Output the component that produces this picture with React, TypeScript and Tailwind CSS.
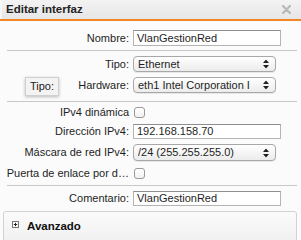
import React from "react";

const Arrows = () => (
  <svg width="6" height="9" viewBox="0 0 6 9" className="absolute right-[6px] top-1/2 -translate-y-1/2">
    <path d="M3 0 L6 3.5 L0 3.5 Z" fill="#222" />
    <path d="M3 9 L6 5.5 L0 5.5 Z" fill="#222" />
  </svg>
);

const Label = ({ children }: { children: React.ReactNode }) => (
  <div className="w-[129px] shrink-0 text-right pr-[0px] whitespace-nowrap">{children}</div>
);

const Input = ({ value }: { value: string }) => (
  <div className="ml-[4px] w-[148px] h-full border border-[#b4b4b4] border-t-[#8e8e8e] bg-white flex items-center pl-[3px] overflow-hidden whitespace-nowrap">
    {value}
  </div>
);

const Select = ({ value }: { value: string }) => (
  <div className="relative ml-[4px] w-[143px] h-full rounded-[4px] border border-[#a8a8a8] bg-gradient-to-b from-white to-[#ececec] flex items-center pl-[4px] pr-[14px] overflow-hidden whitespace-nowrap shadow-[0_1px_0_rgba(0,0,0,0.08)]">
    <span className="overflow-hidden">{value}</span>
    <Arrows />
  </div>
);

const Check = () => (
  <div className="ml-[5px] w-[11px] h-[11px] rounded-[3px] border border-[#9a9a9a] bg-gradient-to-b from-white to-[#f1f1f1]" />
);

const Sep = ({ mt }: { mt: string }) => (
  <div className={`${mt} mx-[7px] mr-[4px] h-px bg-[#c8c8c8]`} />
);

export default function App() {
  return (
    <div
      className="relative w-[301px] h-[240px] overflow-hidden bg-[#fbfbfb] text-[11px] text-[#1e1e1e]"
      style={{ fontFamily: '"Liberation Sans", Arial, sans-serif' }}
    >
      {/* Title bar */}
      <div className="h-[19px] bg-gradient-to-b from-[#f3f3f3] to-[#e6e6e6] border-l-2 border-[#f7f7f7] flex items-center justify-between pl-[4px] pr-[10px]">
        <span className="font-bold text-[11.5px] text-[#222]">Editar interfaz</span>
        <svg width="9" height="9" viewBox="0 0 9 9">
          <path d="M1 1 L8 8 M8 1 L1 8" stroke="#b8b8b8" strokeWidth="2.2" strokeLinecap="round" />
        </svg>
      </div>
      <div className="h-[2px] bg-[#f58426]" />

      {/* Form */}
      <div className="flex flex-col">
        <div className="mt-[9px] h-[16px] flex items-center">
          <Label>Nombre:</Label>
          <Input value="VlanGestionRed" />
        </div>
        <Sep mt="mt-[4px]" />
        <div className="mt-[5px] h-[16px] flex items-center">
          <Label>Tipo:</Label>
          <Select value="Ethernet" />
        </div>
        <div className="mt-[5px] h-[16px] flex items-center">
          <Label>Hardware:</Label>
          <Select value="eth1 Intel Corporation I" />
        </div>
        <Sep mt="mt-[8px]" />
        <div className="mt-[5px] h-[11px] flex items-center">
          <Label>IPv4 dinámica</Label>
          <Check />
        </div>
        <div className="mt-[6px] h-[15px] flex items-center">
          <Label>Dirección IPv4:</Label>
          <Input value="192.168.158.70" />
        </div>
        <div className="mt-[5px] h-[17px] flex items-center">
          <Label>Máscara de red IPv4:</Label>
          <Select value="/24 (255.255.255.0)" />
        </div>
        <div className="mt-[7px] h-[11px] flex items-center">
          <Label>Puerta de enlace por d…</Label>
          <Check />
        </div>
        <Sep mt="mt-[6px]" />
        <div className="mt-[5px] h-[15px] flex items-center">
          <Label>Comentario:</Label>
          <Input value="VlanGestionRed" />
        </div>
        <div className="mt-[5px] ml-[3px] mr-[4px] h-[40px] rounded-tl-[3px] rounded-tr-[3px] border border-[#d2d2d2] bg-gradient-to-b from-[#fbfbfb] to-[#ededed] flex items-start pt-[6px] pl-[8px]">
          <svg width="7" height="7" viewBox="0 0 7 7" className="mt-[3px]">
            <rect x="0.5" y="0.5" width="6" height="6" fill="white" stroke="#777" />
            <path d="M3.5 1.8 V5.2 M1.8 3.5 H5.2" stroke="#222" strokeWidth="1" />
          </svg>
          <span className="ml-[8px] font-bold text-[11.5px] text-[#111]">Avanzado</span>
        </div>
      </div>

      {/* Tooltip */}
      <div className="absolute left-[25px] top-[77px] w-[34px] h-[19px] bg-[#f3f3f3] border border-[#d0d0d0] shadow-[0_1px_3px_rgba(0,0,0,0.25)] flex items-center justify-center text-[11px] text-[#222]">
        Tipo:
      </div>
    </div>
  );
}
